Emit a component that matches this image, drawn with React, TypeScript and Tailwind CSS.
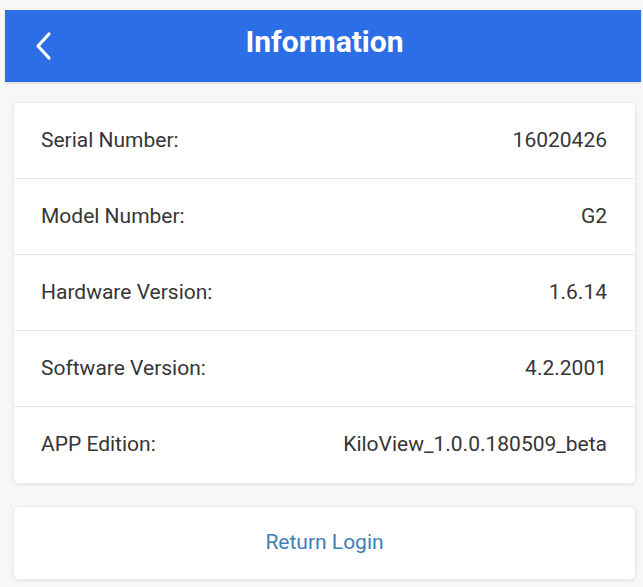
import React from 'react';

const rows: { label: string; value: string }[] = [
  { label: 'Serial Number:', value: '16020426' },
  { label: 'Model Number:', value: 'G2' },
  { label: 'Hardware Version:', value: '1.6.14' },
  { label: 'Software Version:', value: '4.2.2001' },
  { label: 'APP Edition:', value: 'KiloView_1.0.0.180509_beta' },
];

const App: React.FC = () => {
  return (
    <div
      className="w-[643px] h-[587px] bg-[#f7f7f7] overflow-hidden pt-[10px]"
      style={{ fontFamily: 'Roboto, "Liberation Sans", sans-serif' }}
    >
      <div className="ml-[5px] mr-[2px] h-[72px] bg-[#2c6ee6] flex items-center relative shadow-sm">
        <button className="absolute left-[26px] top-[21px] text-white">
          <svg width="24" height="30" viewBox="0 0 24 30" fill="none">
            <path d="M18 3 L7 15 L18 27" stroke="white" strokeWidth="3.2" strokeLinecap="round" strokeLinejoin="round" />
          </svg>
        </button>
        <h1 className="flex-1 text-center text-white font-bold text-[30px] leading-none pb-[8px] pl-[3px]">Information</h1>
      </div>

      <div className="ml-[13px] mr-[7px] mt-[20px] bg-white rounded-[6px] border border-[#ececec] shadow-[0_1px_3px_rgba(0,0,0,0.08)]">
        {rows.map((row, index) => (
          <div
            key={row.label}
            className={`h-[76px] flex items-center justify-between pl-[27px] pr-[28px] text-[21px] text-[#363636] ${
              index < rows.length - 1 ? 'border-b border-[#e6e6e6]' : ''
            }`}
          >
            <span>{row.label}</span>
            <span>{row.value}</span>
          </div>
        ))}
      </div>

      <div className="ml-[13px] mr-[7px] mt-[22px] h-[74px] bg-white rounded-[6px] border border-[#ececec] shadow-[0_1px_3px_rgba(0,0,0,0.08)] flex items-center justify-center">
        <span className="text-[21px] text-[#3f7fb3]">Return Login</span>
      </div>
    </div>
  );
};

export default App;
